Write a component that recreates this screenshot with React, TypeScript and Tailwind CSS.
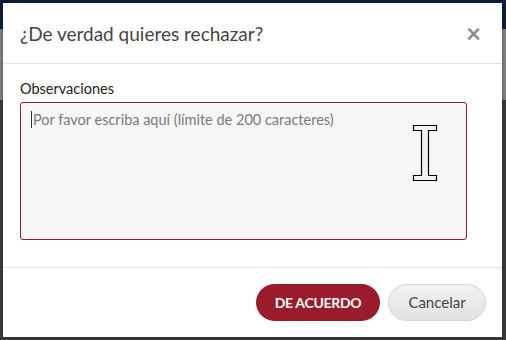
import React from "react";

export default function App() {
  return (
    <div
      className="relative w-[506px] h-[340px] overflow-hidden bg-[#3a3a3a]"
      style={{ fontFamily: "Lato, 'Noto Sans', sans-serif" }}
    >
      <div className="absolute left-0 top-0 w-full h-[29px] bg-[#0e2038]" />
      <div className="absolute left-0 top-[29px] w-full h-[71px] bg-[#7f7f7f]" />
      <div className="absolute left-[3px] top-[3px] w-[499px] h-[334px] bg-white flex flex-col shadow-[0_0_3px_rgba(0,0,0,0.4)]">
        <div className="h-[61px] border-b border-[#e3e3e3] flex items-center justify-between pl-[17px] pr-[21px]">
          <h2 className="text-[19px] text-[#454545] leading-none pt-[1px]">¿De verdad quieres rechazar?</h2>
          <span className="text-[#8a8a8a] text-[26px] font-bold leading-none">×</span>
        </div>
        <div className="h-[204px] border-b border-[#e3e3e3] pl-[17px] pr-[35px] pt-[18px]">
          <label className="block text-[14.5px] text-[#222] leading-none mb-[5px]">Observaciones</label>
          <div className="relative h-[138px] w-[447px] rounded-[3px] border border-[#8c1a3c] bg-[#f7f7f7] pl-[10px] pt-[8px]">
            <div className="flex items-center text-[14.5px] text-[#7a7a7a] leading-[18px]">
              <span className="inline-block w-px h-[17px] bg-[#333] mr-[1px]" />
              Por favor escriba aquí (límite de 200 caracteres)
            </div>
            <svg
              className="absolute left-[391px] top-[21px]"
              width="26"
              height="58"
              viewBox="0 0 26 58"
            >
              <path
                d="M1.5 1.5 H24.5 V6.5 H16.5 V51.5 H24.5 V56.5 H1.5 V51.5 H9.5 V6.5 H1.5 Z"
                fill="#f2f2f2"
                stroke="#000"
                strokeWidth="1.2"
              />
            </svg>
          </div>
        </div>
        <div className="flex-1 flex items-center justify-end pr-[16px] gap-[8px]">
          <button className="h-[37px] w-[124px] rounded-full bg-[#9a1b2b] text-white text-[14px] font-bold tracking-[-0.3px]">
            DE ACUERDO
          </button>
          <button className="h-[37px] w-[98px] rounded-full border border-[#d4d4d4] bg-gradient-to-b from-[#f2f2f2] to-[#e2e2e2] text-[#454545] text-[15px]">
            Cancelar
          </button>
        </div>
      </div>
    </div>
  );
}
